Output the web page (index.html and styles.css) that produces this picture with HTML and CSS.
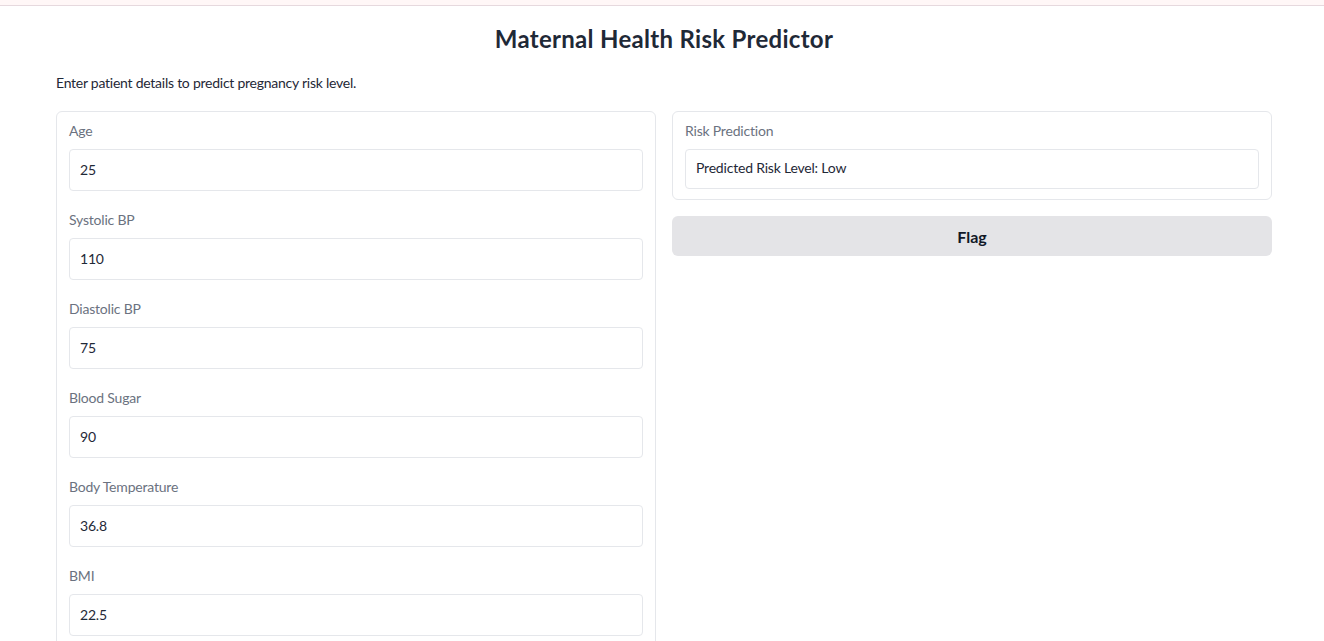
FILE: index.html
```html
<!DOCTYPE html>
<html lang="en">
<head>
<meta charset="utf-8">
<title>Maternal Health Risk Predictor</title>
<link rel="stylesheet" href="styles.css">
</head>
<body>
<div class="topbar"></div>
<main class="app">
  <h1 class="title">Maternal Health Risk Predictor</h1>
  <p class="desc">Enter patient details to predict pregnancy risk level.</p>
  <div class="columns">
    <div class="panel inputs">
      <label class="field"><span class="label">Age</span><input class="input" type="text" value="25"></label>
      <label class="field"><span class="label">Systolic BP</span><input class="input" type="text" value="110"></label>
      <label class="field"><span class="label">Diastolic BP</span><input class="input" type="text" value="75"></label>
      <label class="field"><span class="label">Blood Sugar</span><input class="input" type="text" value="90"></label>
      <label class="field"><span class="label">Body Temperature</span><input class="input" type="text" value="36.8"></label>
      <label class="field"><span class="label">BMI</span><input class="input" type="text" value="22.5"></label>
    </div>
    <div class="right">
      <div class="panel output">
        <span class="label">Risk Prediction</span>
        <div class="output-box">Predicted Risk Level: Low</div>
      </div>
      <button class="flag" type="button">Flag</button>
    </div>
  </div>
</main>
</body>
</html>
```
FILE: styles.css
```css
* { box-sizing: border-box; }
html, body { margin: 0; padding: 0; background: #ffffff; }
body {
  font-family: "Lato", "Liberation Sans", sans-serif;
  color: #1f2937;
  overflow: hidden;
  height: 641px;
}
.topbar {
  height: 6px;
  background: #fff7f7;
  border-bottom: 1px solid #e6d9de;
}
.app {
  padding: 0 52px 0 56px;
}
.title {
  margin: 19px 0 0;
  text-align: center;
  font-size: 24px;
  letter-spacing: 0.3px;
  line-height: 28px;
  font-weight: 700;
  color: #1f2937;
}
.desc {
  margin: 20px 0 0;
  font-size: 14px;
  letter-spacing: -0.25px;
  line-height: 20px;
  color: #1f2937;
}
.columns {
  margin-top: 18px;
  display: grid;
  grid-template-columns: minmax(0, 1fr) minmax(0, 1fr);
  gap: 16px;
  align-items: start;
}
.panel {
  border: 1px solid #e5e7eb;
  border-radius: 6px;
  background: #fff;
  padding: 9px 12px 10px;
}
.inputs {
  display: flex;
  flex-direction: column;
  gap: 19px;
}
.right {
  display: flex;
  flex-direction: column;
  gap: 16px;
}
.field { display: flex; flex-direction: column; min-width: 0; }
.label {
  display: block;
  font-size: 14px;
  letter-spacing: -0.2px;
  line-height: 20px;
  color: #6b7280;
  margin-bottom: 8px;
}
.input {
  width: 100%;
  min-width: 0;
  height: 42px;
  border: 1px solid #e5e7eb;
  border-radius: 4px;
  padding: 0 10px 2px;
  font: inherit;
  font-size: 14px;
  letter-spacing: -0.2px;
  color: #1f2937;
  background: #fff;
  outline: none;
}
.output-box {
  height: 40px;
  border: 1px solid #e5e7eb;
  border-radius: 4px;
  padding: 0 10px 4px;
  display: flex;
  align-items: center;
  font-size: 14px;
  letter-spacing: -0.2px;
  color: #1f2937;
}
.flag {
  height: 40px;
  border: none;
  border-radius: 6px;
  background: #e4e4e7;
  font: inherit;
  font-size: 16px;
  font-weight: 700;
  color: #111827;
  cursor: pointer;
}
```
